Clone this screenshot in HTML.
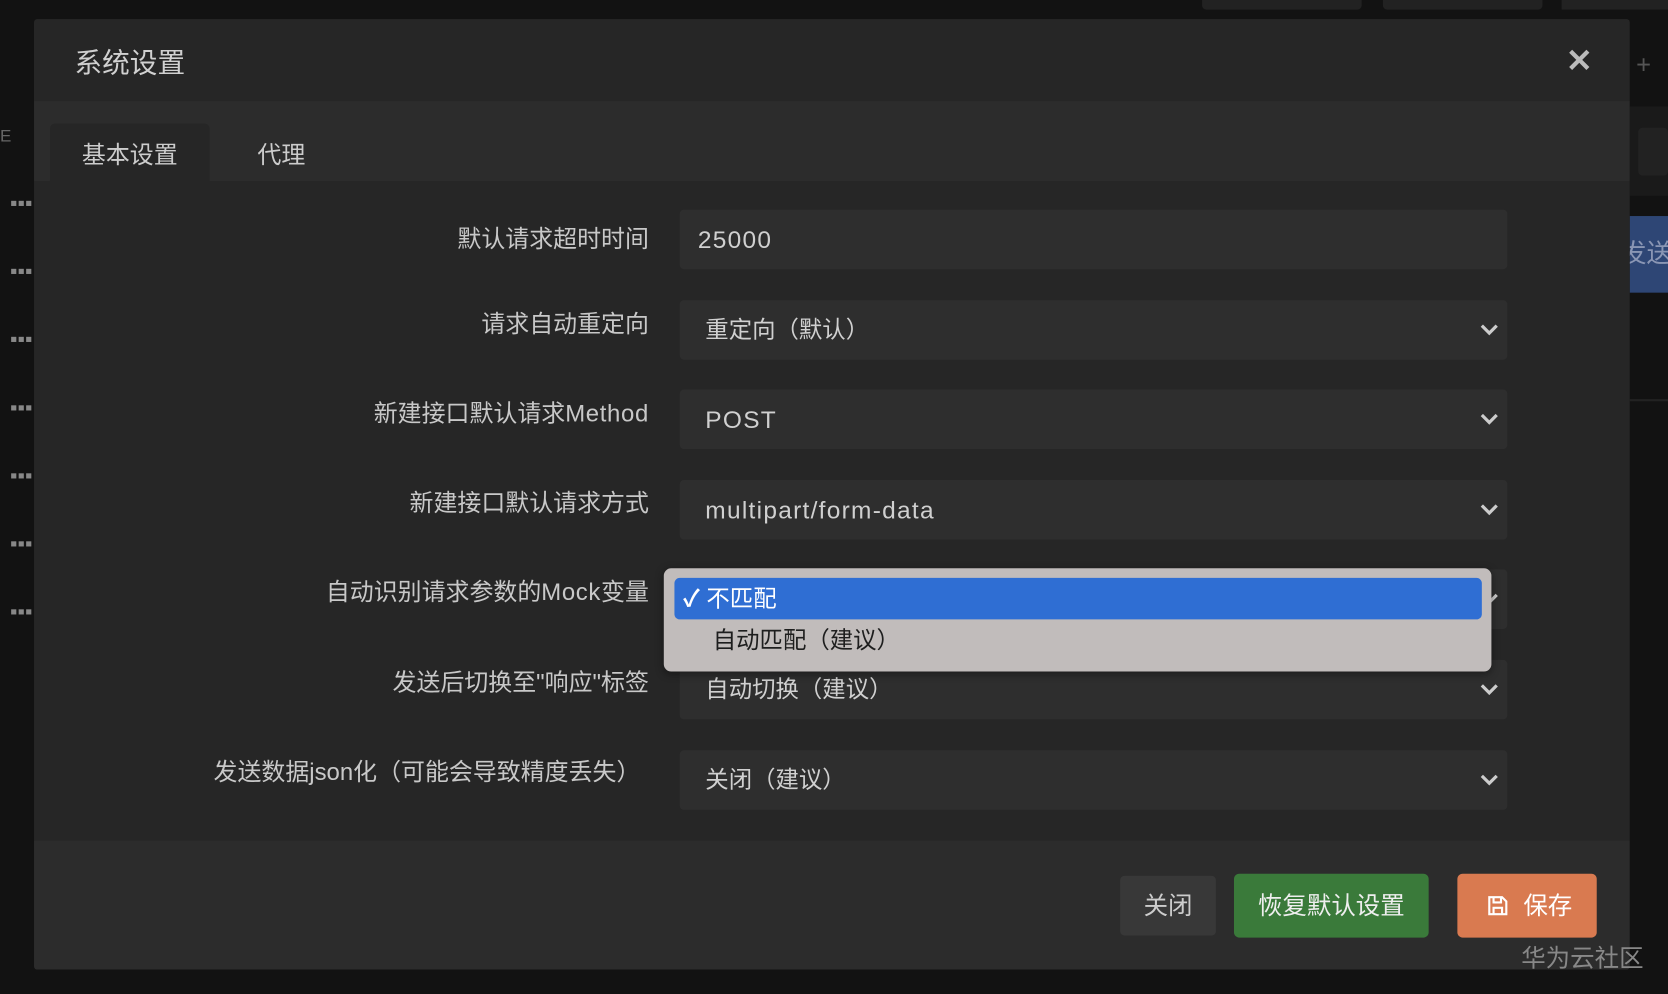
<!DOCTYPE html>
<html><head><meta charset="utf-8"><style>
*{box-sizing:border-box;margin:0;padding:0}
html,body{width:1668px;height:994px;overflow:hidden;background:#121212}
#w{position:absolute;left:0;top:0;width:1568px;height:934px;transform:scale(1.06378,1.06424);transform-origin:0 0;font-family:"Liberation Sans","Noto Sans CJK SC",sans-serif}
.a{position:absolute}
.lbl{position:absolute;right:958px;font-size:22.5px;color:#c8c8c8;white-space:nowrap;line-height:28px}
.inp{position:absolute;left:639px;width:778px;height:56px;background:#2e2e2e;border-radius:4px;font-size:22px;color:#d0d0d0;line-height:56px;padding-left:24px}
.lat{letter-spacing:1.2px;font-size:23px}
.chev{position:absolute;right:8px;top:21px;width:18px;height:14px}
.dots{position:absolute;left:10px;color:#888;font-size:10px;letter-spacing:1px}
</style></head><body><div id="w">
<div class="a" style="left:1130px;top:0;width:150px;height:9px;background:#222;border-radius:0 0 4px 4px"></div>
<div class="a" style="left:1300px;top:0;width:150px;height:9px;background:#222;border-radius:0 0 4px 4px"></div>
<div class="a" style="left:1468px;top:0;width:100px;height:9px;background:#222"></div>
<div class="a" style="left:1532px;top:100px;width:36px;height:84px;background:#1a1a1a"></div>
<div class="a" style="left:1540px;top:120px;width:28px;height:45px;background:#222;border-radius:4px"></div>
<div class="a" style="left:1538px;top:48px;color:#555;font-size:24px">+</div>
<div class="a" style="left:1532px;top:203px;width:36px;height:72px;background:#2e4675;color:#8a96b4;font-size:24px;line-height:72px;overflow:hidden;white-space:nowrap;text-indent:-8px">发送</div>
<div class="a" style="left:1532px;top:375px;width:36px;height:2px;background:#222"></div>
<div class="a" style="left:0;top:120px;color:#666;font-size:16px">E</div>
<div class="dots" style="top:186px">■■■</div><div class="dots" style="top:250px">■■■</div><div class="dots" style="top:314px">■■■</div><div class="dots" style="top:378px">■■■</div><div class="dots" style="top:442px">■■■</div><div class="dots" style="top:506px">■■■</div><div class="dots" style="top:570px">■■■</div>
<div class="a" style="left:32px;top:18px;width:1500px;height:893px;background:#262626;border-radius:3px;overflow:hidden">
 <div class="a" style="left:0;top:0;width:1500px;height:77px;background:#262626"></div>
 <div class="a" style="left:38px;top:21px;font-size:26px;color:#d0d0d0">系统设置</div>
 <div class="a" style="left:1440px;top:22px;font-size:30px;color:#bbb;font-weight:bold">✕</div>
 <div class="a" style="left:0;top:77px;width:1500px;height:75px;background:#2c2c2c"></div>
 <div class="a" style="left:15px;top:98px;width:150px;height:54px;background:#262626;border-radius:5px 5px 0 0"></div>
 <div class="a" style="left:45px;top:110px;font-size:22.5px;color:#ccc">基本设置</div>
 <div class="a" style="left:210px;top:110px;font-size:22.5px;color:#ccc">代理</div>
 <div class="a" style="left:0;top:772px;width:1500px;height:121px;background:#2c2c2c"></div>
</div>
<div class="lbl" style="top:211px">默认请求超时时间</div>
<div class="lbl" style="top:291px">请求自动重定向</div>
<div class="lbl" style="top:375px">新建接口默认请求<span class="lat" style="font-size:22.5px;letter-spacing:0.6px">Method</span></div>
<div class="lbl" style="top:459px">新建接口默认请求方式</div>
<div class="lbl" style="top:543px">自动识别请求参数的<span style="letter-spacing:0.6px">Mock</span>变量</div>
<div class="lbl" style="top:628px">发送后切换至"响应"标签</div>
<div class="lbl" style="top:712px;right:966px">发送数据json化（可能会导致精度丢失）</div>
<svg width="0" height="0" style="position:absolute"><defs><symbol id="cv" viewBox="0 0 18 14"><path d="M2 3l7 7 7-7" stroke="#ccc" stroke-width="3" fill="none"/></symbol></defs></svg>
<div class="inp lat" style="top:197px;padding-left:17px">25000</div>
<div class="inp" style="top:282px">重定向（默认）<svg class="chev"><use href="#cv"/></svg></div>
<div class="inp lat" style="top:366px">POST<svg class="chev"><use href="#cv"/></svg></div>
<div class="inp lat" style="top:451px">multipart/form-data<svg class="chev"><use href="#cv"/></svg></div>
<div class="inp" style="top:535px"><svg class="chev"><use href="#cv"/></svg></div>
<div class="inp" style="top:620px">自动切换（建议）<svg class="chev"><use href="#cv"/></svg></div>
<div class="inp" style="top:705px">关闭（建议）<svg class="chev"><use href="#cv"/></svg></div>
<div class="a" style="left:624px;top:534px;width:778px;height:97px;background:#c1bcbb;border-radius:7px;box-shadow:0 2px 8px rgba(0,0,0,.4)"></div>
<div class="a" style="left:634px;top:543px;width:759px;height:39px;background:#2f6ed3;border-radius:5px;color:#fff;font-size:22px;line-height:39px;padding-left:8px;font-weight:bold">✓ <span style="font-weight:normal">不匹配</span></div>
<div class="a" style="left:670px;top:588px;font-size:22px;color:#1e1e1e;line-height:28px">自动匹配（建议）</div>
<div class="a" style="left:1053px;top:823px;width:90px;height:56px;background:#383838;border-radius:4px;color:#ccc;font-size:23px;line-height:56px;text-align:center">关闭</div>
<div class="a" style="left:1160px;top:821px;width:183px;height:60px;background:#3a7a3a;border-radius:5px;color:#eee;font-size:23px;line-height:60px;text-align:center">恢复默认设置</div>
<div class="a" style="left:1370px;top:821px;width:131px;height:60px;background:#d97a50;border-radius:5px;color:#fff;font-size:23px;line-height:60px;padding-left:28px">
<svg width="20" height="20" viewBox="0 0 20 20" style="position:absolute;left:28px;top:20px"><path d="M2 2h12l4 4v12H2z M6 2v5h7V2 M6 18v-6h8v6" stroke="#fff" stroke-width="2" fill="none"/></svg>
<span style="margin-left:34px">保存</span></div>
<div class="a" style="left:1430px;top:881px;color:#888;font-size:23px">华为云社区</div>
</div></body></html>
